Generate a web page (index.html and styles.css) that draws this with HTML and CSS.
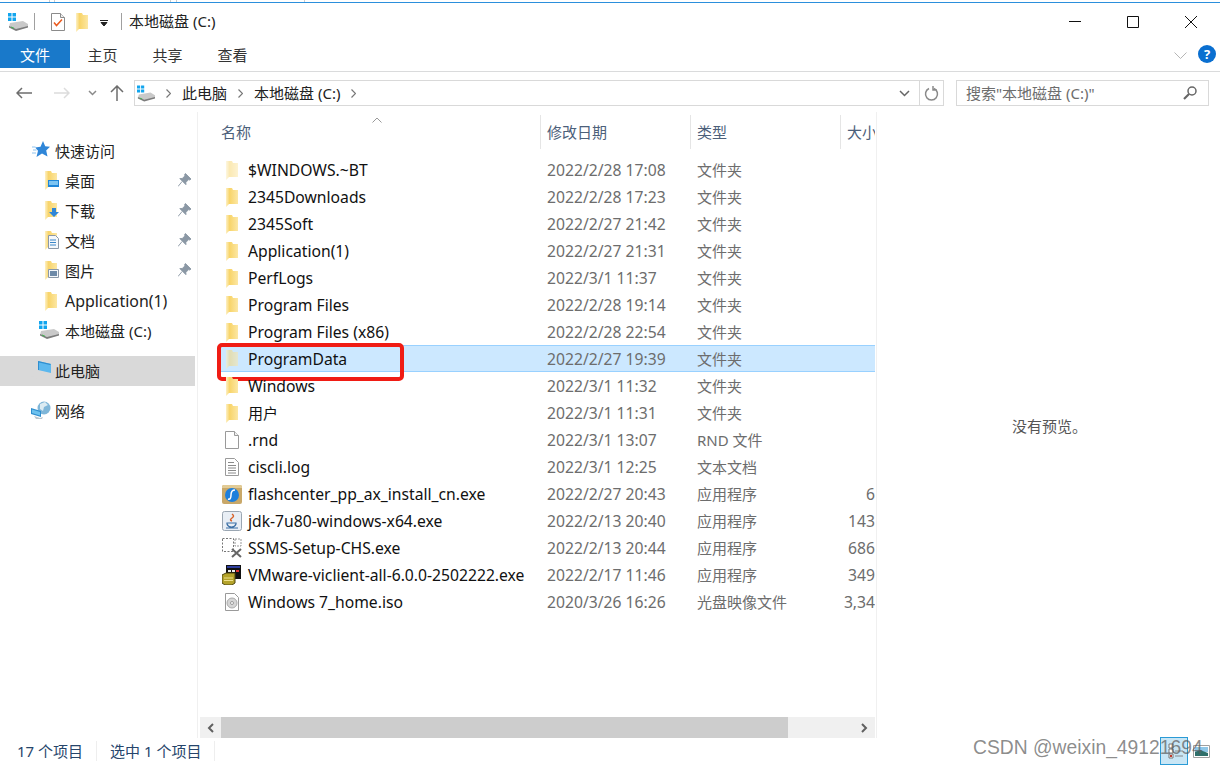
FILE: index.html
```html
<!DOCTYPE html>
<html lang="zh-CN">
<head>
  <meta charset="UTF-8" />
  <title>本地磁盘 (C:)</title>
  <link rel="stylesheet" href="styles.css">
</head>
<body>
  <!-- shared icons -->
  <svg class="sprite" width="0" height="0">
    <defs>
      <linearGradient id="folderFill" x1="0" y1="0" x2="1" y2="0">
        <stop offset="0" stop-color="#fdf0c4" />
        <stop offset="0.3" stop-color="#f8d469" />
        <stop offset="1" stop-color="#fce7a4" />
      </linearGradient>
      <symbol id="i-folder" viewBox="0 0 16 20">
        <path d="M2 1h6l1 2h5v14H5l-3 3z" fill="url(#folderFill)" />
      </symbol>
      <symbol id="i-disk" viewBox="0 0 20 18">
        <path d="M0 0h3.500v3.500H0zM4.500 0H8v3.500H4.500zM0 4.500h3.500V8H0zM4.500 4.500H8V8H4.500z" fill="#12a5ee" />
        <path d="M2 10l13-2 5 3v3l-12 3-7-3z" fill="#c9c9c9" />
        <path d="M1 13l7 3 12-3v1.500L8 18l-7-3.500z" fill="#7c7c7c" />
        <path d="M3 13.500l3 1.200v1l-3-1.200z" fill="#3fb34f" />
      </symbol>
      <symbol id="i-check" viewBox="0 0 16 18">
        <path d="M1.500 .5h9l4 4v13h-13z" fill="#fff" stroke="#8b8b8b" />
        <path d="M10.500 .5v4h4" fill="#eee" stroke="#8b8b8b" />
        <path d="M4 9.500l2.500 3L12 6.500" fill="none" stroke="#ea5a1e" stroke-width="1.500" />
      </symbol>
      <symbol id="i-star" viewBox="0 0 18 18">
        <path d="M11 0l2.200 5.300 4.800.5-3.800 3.600 1.300 6.100L10 12.500 4.500 16l1.500-6.200-2.800-3.300 5.300-.7z" fill="#2f86d8" />
        <path d="M0 6h3.500M1 9h3.500M0 12h4" stroke="#8fc3ee" />
      </symbol>
      <symbol id="i-pin" viewBox="0 0 14 14">
        <path d="M8 0l6 6-1.500 1-1-.5L8.500 9.500V12L2 5.500h2.500l3-3L7 1.500zM4.500 8.500L0 14" fill="#8b98a5" stroke="#8b98a5" />
      </symbol>
      <symbol id="i-pc" viewBox="0 0 20 18">
        <path d="M7 0l13 3v9L7 9z" fill="#5cb8ee" />
        <path d="M7 0l13 3-1 1L8 1.500V9H7z" fill="#2f8ecf" />
        <path d="M10 10l5 2v2l-5-1.500zM0 15l12-2 5 2-10 3z" fill="#d9d9d9" />
      </symbol>
      <symbol id="i-net" viewBox="0 0 20 18">
        <circle cx="13" cy="7" r="6.500" fill="#7fb6d8" />
        <path d="M9 3l5-2 3 3-4 2-1 4-3-2z" fill="#dcebf2" />
        <path d="M0 7l10 3v6L0 13z" fill="#2f8ecf" />
        <path d="M1 8.500l8 2.500v3.500L1 12z" fill="#6cc1ee" />
        <path d="M3 15l6 2 3-1-1 2H5z" fill="#b9c4cc" />
      </symbol>
      <symbol id="i-blank" viewBox="0 0 16 20">
        <path d="M1.500 1.500h9l4 4v13h-13z" fill="#fff" stroke="#9a9a9a" />
        <path d="M10.500 1.500v4h4" fill="#f0f0f0" stroke="#9a9a9a" />
      </symbol>
      <symbol id="i-log" viewBox="0 0 16 20">
        <path d="M1.500 1.500h9l4 4v13h-13z" fill="#fff" stroke="#9a9a9a" />
        <path d="M4 5.500h6M4 8.500h8M4 11h8M4 13.500h8M4 16h8" stroke="#8a8a8a" />
      </symbol>
      <symbol id="i-flash" viewBox="0 0 20 20">
        <path d="M0 3q0-2 2-2h16q2 0 2 2v15q0 2-2 2H2q-2 0-2-2z" fill="#c9a869" />
        <path d="M0 3q0-2 2-2h16q2 0 2 2v1H0z" fill="#e2cb95" />
        <circle cx="10" cy="11" r="7" fill="#1e7fdc" />
        <path d="M13 6q-4 0-4 5t-3 4" fill="none" stroke="#fff" stroke-width="1.500" />
      </symbol>
      <symbol id="i-java" viewBox="0 0 20 20">
        <rect x=".5" y=".5" width="19" height="19" rx="2" fill="#e8eef5" stroke="#9aa6b2" />
        <path d="M10 3q3 2 0 4t0 3" fill="none" stroke="#d8622a" stroke-width="1.500" />
        <path d="M5 12h9v1q-1 3-4.500 3T5 13zM4 17h12" fill="none" stroke="#3b6fa5" stroke-width="1.200" />
      </symbol>
      <symbol id="i-ssms" viewBox="0 0 20 20">
        <path d="M.5 .5h11v13H.5z" fill="none" stroke="#777" stroke-dasharray="2 1.500" />
        <path d="M13 1h6v7h-6z" fill="none" stroke="#999" stroke-dasharray="2 1" />
        <path d="M10 11l9 8M19 11l-9 8" stroke="#666" stroke-width="2" />
      </symbol>
      <symbol id="i-vm" viewBox="0 0 20 20">
        <path d="M4 0h15v14H4z" fill="#111" />
        <path d="M5 1h13v2H5z" fill="#2f3f9f" />
        <path d="M6 5h3v2H6zM10 5h3v2h-3z" fill="#eee" />
        <path d="M14 5h3v2h-3z" fill="#d33" />
        <path d="M0 10l4-2h9v10l-3 2H3l-3-2z" fill="#b4a32a" stroke="#4d4510" />
        <path d="M2 13h9M2 15.500h9" stroke="#eee08a" />
      </symbol>
      <symbol id="i-iso" viewBox="0 0 16 20">
        <path d="M1.500 1.500h9l4 4v13h-13z" fill="#fff" stroke="#9a9a9a" />
        <circle cx="8" cy="11" r="5" fill="#d5d5d5" stroke="#aaa" />
        <circle cx="8" cy="11" r="1.500" fill="#fff" stroke="#999" />
      </symbol>
    </defs>
  </svg>

  <div class="window">
    <div class="edge"><span></span><span></span><span></span><span></span><span></span></div>

    <div class="titlebar">
      <svg class="qat-disk"><use href="#i-disk" /></svg>
      <i class="vsep"></i>
      <svg class="qat-check"><use href="#i-check" /></svg>
      <svg class="qat-folder"><use href="#i-folder" /></svg>
      <svg class="qat-drop" viewBox="0 0 8 6"><path d="M0 .5h8M1 2.500h6L4 6z" stroke="#222" fill="#222" /></svg>
      <i class="vsep sep2"></i>
      <span class="title">本地磁盘 (C:)</span>
      <div class="winbtns">
        <svg viewBox="0 0 12 12"><path d="M0 5.500h12" stroke="#111" /></svg>
        <svg viewBox="0 0 12 12"><path d="M.5 .5h11v11H.5z" fill="none" stroke="#111" /></svg>
        <svg viewBox="0 0 12 12"><path d="M0 0l12 12M12 0L0 12" stroke="#111" /></svg>
      </div>
    </div>

    <div class="ribbon">
      <button class="tab file">文件</button>
      <button class="tab">主页</button>
      <button class="tab">共享</button>
      <button class="tab">查看</button>
      <svg class="ribbon-arrow" viewBox="0 0 13 7"><path d="M.5 .5l6 6 6-6" fill="none" stroke="#b5b5b5" /></svg>
      <span class="help">?</span>
    </div>

    <div class="addressbar">
      <svg class="nav-btn back" viewBox="0 0 16 12"><path d="M16 6H1M6 1L1 6l5 5" fill="none" stroke="#6d6d6d" stroke-width="1.500" /></svg>
      <svg class="nav-btn forward" viewBox="0 0 16 12"><path d="M0 6h15M10 1l5 5-5 5" fill="none" stroke="#dcdcdc" stroke-width="1.500" /></svg>
      <svg class="nav-btn down" viewBox="0 0 9 6"><path d="M1 1l3.500 3.500L8 1" fill="none" stroke="#8a8a8a" stroke-width="1.500" /></svg>
      <svg class="nav-btn up" viewBox="0 0 14 16"><path d="M7 16V1M1 7l6-6 6 6" fill="none" stroke="#6d6d6d" stroke-width="1.500" /></svg>
      <div class="path">
        <svg class="path-disk"><use href="#i-disk" /></svg>
        <svg class="crumb-arrow" viewBox="0 0 5 9"><path d="M.5 .5l4 4-4 4" fill="none" stroke="#777" stroke-width="1.200" /></svg>
        <span class="crumb">此电脑</span>
        <svg class="crumb-arrow" viewBox="0 0 5 9"><path d="M.5 .5l4 4-4 4" fill="none" stroke="#777" stroke-width="1.200" /></svg>
        <span class="crumb">本地磁盘 (C:)</span>
        <svg class="crumb-arrow" viewBox="0 0 5 9"><path d="M.5 .5l4 4-4 4" fill="none" stroke="#777" stroke-width="1.200" /></svg>
        <svg class="path-drop" viewBox="0 0 11 7"><path d="M1 1l4.500 4.500L10 1" fill="none" stroke="#666" stroke-width="1.500" /></svg>
        <span class="refresh">
          <svg viewBox="0 0 15 15"><path d="M10 2.500a6 6 0 1 1-5 0M9 0v4h4" fill="none" stroke="#8a8a8a" stroke-width="1.500" /></svg>
        </span>
      </div>
      <div class="search">
        <span class="crumb">搜索"本地磁盘 (C:)"</span>
        <svg viewBox="0 0 14 14"><circle cx="9" cy="5" r="4" fill="none" stroke="#666" stroke-width="1.500" /><path d="M6 8l-5 5" stroke="#666" stroke-width="2.200" /></svg>
      </div>
    </div>

    <div class="main">
      <div class="sidebar">
        <div class="nav-item top"><svg><use href="#i-star" /></svg>快速访问</div>
        <div class="nav-item sub">
          <svg viewBox="0 0 16 20"><use href="#i-folder" /><path d="M5 10h11v7H5z" fill="#1f86d8" /><path d="M6 11h9v4H6z" fill="#7cc4f2" /></svg>桌面
          <svg class="pin"><use href="#i-pin" /></svg>
        </div>
        <div class="nav-item sub">
          <svg viewBox="0 0 16 20"><use href="#i-folder" /><path d="M9 8h4v4h3l-5 5-5-5h3z" fill="#2f86d8" /></svg>下载
          <svg class="pin"><use href="#i-pin" /></svg>
        </div>
        <div class="nav-item sub">
          <svg viewBox="0 0 16 20"><use href="#i-folder" /><path d="M5.500 5.500h7l3 3v10h-10z" fill="#f5f8fb" stroke="#8a98a8" /><path d="M7 10h6M7 12.500h6M7 15h6" stroke="#3a86c8" /></svg>文档
          <svg class="pin"><use href="#i-pin" /></svg>
        </div>
        <div class="nav-item sub">
          <svg viewBox="0 0 16 20"><use href="#i-folder" /><path d="M5.500 9.500h10v8h-10z" fill="#f5f8fb" stroke="#8a98a8" /><path d="M7 11h7v5H7z" fill="#6d8aa8" /></svg>图片
          <svg class="pin"><use href="#i-pin" /></svg>
        </div>
        <div class="nav-item sub latin"><svg><use href="#i-folder" /></svg>Application(1)</div>
        <div class="nav-item sub"><svg class="wide"><use href="#i-disk" /></svg>本地磁盘 (C:)</div>
        <div class="nav-item top active group"><svg><use href="#i-pc" /></svg>此电脑</div>
        <div class="nav-item top group"><svg><use href="#i-net" /></svg>网络</div>
      </div>

      <div class="files">
        <div class="columns">
          <div class="col">名称
            <svg class="sort" viewBox="0 0 10 6"><path d="M.5 5.500L5 1l4.500 4.500" fill="none" stroke="#999" /></svg>
          </div>
          <div class="col">修改日期</div>
          <div class="col">类型</div>
          <div class="col">大小</div>
        </div>

        <div class="rows">
          <div class="row">
            <div class="name"><svg class="faded"><use href="#i-folder" /></svg>$WINDOWS.~BT</div>
            <div class="cell">2022/2/28 17:08</div><div class="type">文件夹</div><div class="size"></div>
          </div>
          <div class="row">
            <div class="name"><svg><use href="#i-folder" /></svg>2345Downloads</div>
            <div class="cell">2022/2/28 17:23</div><div class="type">文件夹</div><div class="size"></div>
          </div>
          <div class="row">
            <div class="name"><svg><use href="#i-folder" /></svg>2345Soft</div>
            <div class="cell">2022/2/27 21:42</div><div class="type">文件夹</div><div class="size"></div>
          </div>
          <div class="row">
            <div class="name"><svg><use href="#i-folder" /></svg>Application(1)</div>
            <div class="cell">2022/2/27 21:31</div><div class="type">文件夹</div><div class="size"></div>
          </div>
          <div class="row">
            <div class="name"><svg><use href="#i-folder" /></svg>PerfLogs</div>
            <div class="cell">2022/3/1 11:37</div><div class="type">文件夹</div><div class="size"></div>
          </div>
          <div class="row">
            <div class="name"><svg><use href="#i-folder" /></svg>Program Files</div>
            <div class="cell">2022/2/28 19:14</div><div class="type">文件夹</div><div class="size"></div>
          </div>
          <div class="row">
            <div class="name"><svg><use href="#i-folder" /></svg>Program Files (x86)</div>
            <div class="cell">2022/2/28 22:54</div><div class="type">文件夹</div><div class="size"></div>
          </div>
          <div class="row selected">
            <div class="name"><svg class="faded"><use href="#i-folder" /></svg>ProgramData</div>
            <div class="cell">2022/2/27 19:39</div><div class="type">文件夹</div><div class="size"></div>
            <div class="redbox"></div>
          </div>
          <div class="row">
            <div class="name"><svg><use href="#i-folder" /></svg>Windows</div>
            <div class="cell">2022/3/1 11:32</div><div class="type">文件夹</div><div class="size"></div>
          </div>
          <div class="row">
            <div class="name cjk"><svg><use href="#i-folder" /></svg>用户</div>
            <div class="cell">2022/3/1 11:31</div><div class="type">文件夹</div><div class="size"></div>
          </div>
          <div class="row">
            <div class="name"><svg><use href="#i-blank" /></svg>.rnd</div>
            <div class="cell">2022/3/1 13:07</div><div class="type">RND 文件</div><div class="size"></div>
          </div>
          <div class="row">
            <div class="name"><svg><use href="#i-log" /></svg>ciscli.log</div>
            <div class="cell">2022/3/1 12:25</div><div class="type">文本文档</div><div class="size"></div>
          </div>
          <div class="row">
            <div class="name"><svg><use href="#i-flash" /></svg>flashcenter_pp_ax_install_cn.exe</div>
            <div class="cell">2022/2/27 20:43</div><div class="type">应用程序</div><div class="size">6</div>
          </div>
          <div class="row">
            <div class="name"><svg><use href="#i-java" /></svg>jdk-7u80-windows-x64.exe</div>
            <div class="cell">2022/2/13 20:40</div><div class="type">应用程序</div><div class="size">143</div>
          </div>
          <div class="row">
            <div class="name"><svg><use href="#i-ssms" /></svg>SSMS-Setup-CHS.exe</div>
            <div class="cell">2022/2/13 20:44</div><div class="type">应用程序</div><div class="size">686</div>
          </div>
          <div class="row">
            <div class="name"><svg><use href="#i-vm" /></svg>VMware-viclient-all-6.0.0-2502222.exe</div>
            <div class="cell">2022/2/17 11:46</div><div class="type">应用程序</div><div class="size">349</div>
          </div>
          <div class="row">
            <div class="name"><svg><use href="#i-iso" /></svg>Windows 7_home.iso</div>
            <div class="cell">2020/3/26 16:26</div><div class="type">光盘映像文件</div><div class="size">3,34</div>
          </div>
        </div>

        <div class="hscroll">
          <span class="sbtn"><svg viewBox="0 0 7 10"><path d="M6 1L2 5l4 4" fill="none" stroke="#606060" stroke-width="2" /></svg></span>
          <span class="thumb"></span>
          <span class="sbtn right"><svg viewBox="0 0 7 10"><path d="M1 1l4 4-4 4" fill="none" stroke="#606060" stroke-width="2" /></svg></span>
        </div>
      </div>

      <div class="preview">没有预览。</div>
    </div>

    <div class="statusbar">
      <span class="count">17 个项目</span>
      <span class="count">选中 1 个项目</span>
      <div class="views">
        <span class="view-btn on">
          <svg viewBox="0 0 18 18"><path d="M4 2h4v4H4zM4 7h4v4H4zM4 12h4v4H4z" fill="#fff" stroke="#777" /><path d="M5 13h2v2H5z" fill="#c0392b" /><path d="M10 9h8M10 14h8" stroke="#888" /></svg>
        </span>
        <span class="view-btn">
          <svg viewBox="0 0 17 13"><path d="M.5 .5h16v12H.5z" fill="#fff" stroke="#a0a0a0" /><path d="M2 2h13v5H2z" fill="#8fc7e8" /><path d="M2 7l5-2 8 3v3H2z" fill="#2f6f6a" /></svg>
        </span>
      </div>
    </div>

    <div class="watermark">CSDN @weixin_49121694</div>
  </div>
</body>
</html>
```

FILE: styles.css
```css
* {
  margin: 0;
  padding: 0;
  box-sizing: border-box;
}

html, body {
  height: 100%;
  overflow: hidden;
  background: #fff;
  font-family: 'Noto Sans', 'Noto Sans CJK SC', sans-serif;
  font-size: 15px;
  color: #1a1a1a;
}

.sprite {
  position: absolute;
}

.window {
  display: flex;
  flex-direction: column;
  height: 766px;
  position: relative;
}

/* sliver of the window behind */
.edge {
  display: flex;
  height: 3px;
  border-bottom: 1px solid #2b8fdc;
}

.edge span {
  width: 1px;
  background: #ccc;
}

.edge span:nth-child(1) { margin-left: 49px; }
.edge span:nth-child(2) { margin-left: 4px; }
.edge span:nth-child(3) { margin-left: 115px; }
.edge span:nth-child(4) { margin-left: 5px; }
.edge span:nth-child(5) { margin-left: 127px; }

.titlebar {
  display: flex;
  align-items: center;
  height: 37px;
  padding-left: 8px;
}

.qat-disk { width: 20px; height: 18px; }
.vsep { width: 1px; height: 17px; background: #a0a0a0; margin-left: 6px; }
.qat-check { width: 16px; height: 18px; margin-left: 15px; }
.qat-folder { width: 16px; height: 20px; margin-left: 8px; }
.qat-drop { width: 8px; height: 6px; margin-left: 10px; margin-top: 2px; }
.sep2 { margin-left: 13px; }

.title {
  margin-left: 7px;
  padding-bottom: 2px;
  color: #222;
}

.winbtns {
  display: flex;
  gap: 46px;
  margin-left: auto;
  margin-right: 23px;
}

.winbtns svg {
  width: 12px;
  height: 12px;
}

.ribbon {
  display: flex;
  align-items: flex-start;
  height: 32px;
  padding-right: 4px;
  border-bottom: 1px solid #dadbdc;
}

.tab {
  width: 65px;
  height: 28px;
  border: none;
  background: none;
  font: inherit;
  color: #333;
}

.tab.file {
  width: 70px;
  background: #1979ca;
  color: #fff;
}

.ribbon-arrow {
  width: 13px;
  height: 7px;
  margin-left: auto;
  margin-top: 12px;
}

.help {
  width: 18px;
  height: 18px;
  margin-left: 11px;
  margin-top: 5px;
  border-radius: 50%;
  background: #0a6fd0;
  color: #fff;
  font-size: 13px;
  font-weight: 700;
  line-height: 18px;
  text-align: center;
}

.addressbar {
  display: flex;
  align-items: center;
  height: 40px;
  padding: 8px 11px 6px 16px;
}

.nav-btn.back { width: 16px; height: 12px; }
.nav-btn.forward { width: 16px; height: 12px; margin-left: 22px; }
.nav-btn.down { width: 9px; height: 6px; margin-left: 18px; }
.nav-btn.up { width: 14px; height: 16px; margin-left: 13px; }

.path {
  display: flex;
  align-items: center;
  width: 810px;
  height: 26px;
  margin-left: 10px;
  padding-left: 2px;
  border: 1px solid #d9d9d9;
  color: #222;
}

.crumb {
  padding-bottom: 2px;
}

.path-disk { width: 18px; height: 17px; }
.crumb-arrow { width: 5px; height: 9px; margin: 0 11px; }
.path-drop { width: 11px; height: 7px; margin-left: auto; margin-right: 9px; }

.refresh {
  display: flex;
  align-items: center;
  justify-content: center;
  width: 24px;
  height: 100%;
  border-left: 1px solid #d9d9d9;
}

.refresh svg {
  width: 15px;
  height: 15px;
}

.search {
  display: flex;
  align-items: center;
  justify-content: space-between;
  width: 253px;
  height: 26px;
  margin-left: auto;
  padding: 0 11px 0 9px;
  border: 1px solid #d9d9d9;
  color: #6d6d6d;
}

.search svg {
  width: 14px;
  height: 14px;
}

.main {
  display: flex;
  flex: 1;
  min-height: 0;
}

.sidebar {
  width: 198px;
  padding: 24px 2px 0 0;
  border-right: 1px solid #f0f0f0;
}

.nav-item {
  display: flex;
  align-items: center;
  height: 30px;
  padding-bottom: 2px;
  color: #222;
}

.nav-item svg {
  width: 16px;
  height: 20px;
  flex: none;
  margin-right: 6px;
}

.nav-item.top { padding-left: 31px; }
.nav-item.top svg { width: 20px; height: 18px; margin-right: 4px; }
.nav-item.sub { padding-left: 43px; padding-right: 4px; }
.nav-item.group { margin-top: 10px; }
.nav-item.active { background: #d9d9d9; }
.nav-item.latin { font-size: 15.9px; padding-bottom: 0; }

.nav-item svg.pin {
  width: 13px;
  height: 14px;
  margin: 0 0 0 auto;
}

.nav-item svg.wide {
  width: 20px;
  height: 18px;
  margin-left: -4px;
  margin-right: 6px;
}

.files {
  display: flex;
  flex-direction: column;
  width: 679px;
  padding: 0 1px 0 22px;
  border-right: 1px solid #f0f0f0;
  position: relative;
}

.columns,
.row {
  display: grid;
  grid-template-columns: 320px 150px 150px 35px;
}

.columns {
  height: 44px;
  padding-bottom: 4px;
  align-items: center;
}

.col {
  height: 34px;
  padding-left: 6px;
  line-height: 34px;
  border-left: 1px solid #e5e5e5;
  color: #4c607a;
  overflow: hidden;
  white-space: nowrap;
}

.col:first-child {
  padding-left: 1px;
  border-left: none;
  position: relative;
}

.sort {
  position: absolute;
  left: 152px;
  top: 2px;
  width: 10px;
  height: 6px;
}

.rows {
  flex: 1;
}

.row {
  height: 27px;
  align-items: center;
  position: relative;
}

.row.selected {
  background: #cce8ff;
  border-top: 1px solid #99d1ff;
  border-bottom: 1px solid #99d1ff;
}

.name {
  display: flex;
  align-items: center;
  gap: 6px;
  padding-left: 2px;
  font-size: 15.7px;
  color: #111;
  white-space: nowrap;
}

.name.cjk {
  font-size: 15px;
}

.name svg {
  width: 20px;
  height: 20px;
  flex: none;
}

.faded {
  opacity: 0.5;
}

.cell {
  padding-left: 7px;
  font-size: 15.7px;
  color: #6d6d6d;
  white-space: nowrap;
}

.type {
  padding-left: 7px;
  color: #6d6d6d;
  white-space: nowrap;
}

.size {
  font-size: 15.7px;
  color: #6d6d6d;
  text-align: right;
  white-space: nowrap;
  overflow: hidden;
}

/* red annotation drawn on the screenshot */
.redbox {
  position: absolute;
  left: -3px;
  top: -3px;
  width: 187px;
  height: 38px;
  border: 4px solid #f01c14;
  border-radius: 5px;
}

.hscroll {
  display: flex;
  height: 21px;
  margin: 0 0 0 -20px;
  background: #f0f0f0;
}

.sbtn {
  display: flex;
  align-items: center;
  justify-content: center;
  width: 21px;
}

.sbtn svg {
  width: 7px;
  height: 10px;
}

.sbtn.right {
  margin-left: auto;
}

.thumb {
  width: 567px;
  background: #cdcdcd;
}

.preview {
  flex: 1;
  display: flex;
  align-items: center;
  justify-content: center;
  padding-left: 2px;
  color: #555;
}

.statusbar {
  display: flex;
  align-items: center;
  height: 28px;
  padding-left: 17px;
  padding-bottom: 2px;
}

.count {
  color: #26456b;
  padding-right: 13px;
  margin-right: 13px;
  border-right: 1px solid #eee;
  line-height: 20px;
}

.views {
  display: flex;
  align-items: center;
  gap: 5px;
  margin-left: auto;
  margin-right: 10px;
}

.view-btn {
  display: flex;
  align-items: center;
  justify-content: center;
  width: 17px;
  height: 13px;
}

.view-btn svg {
  width: 17px;
  height: 13px;
}

.view-btn.on {
  width: 28px;
  height: 28px;
  background: #c9e6f5;
  border: 1px solid #2b9bd6;
}

.view-btn.on svg {
  width: 18px;
  height: 18px;
}

.watermark {
  position: absolute;
  left: 973px;
  top: 737px;
  font-family: 'Liberation Sans', sans-serif;
  font-size: 19.3px;
  color: rgba(90, 90, 90, 0.7);
  white-space: nowrap;
}
```
